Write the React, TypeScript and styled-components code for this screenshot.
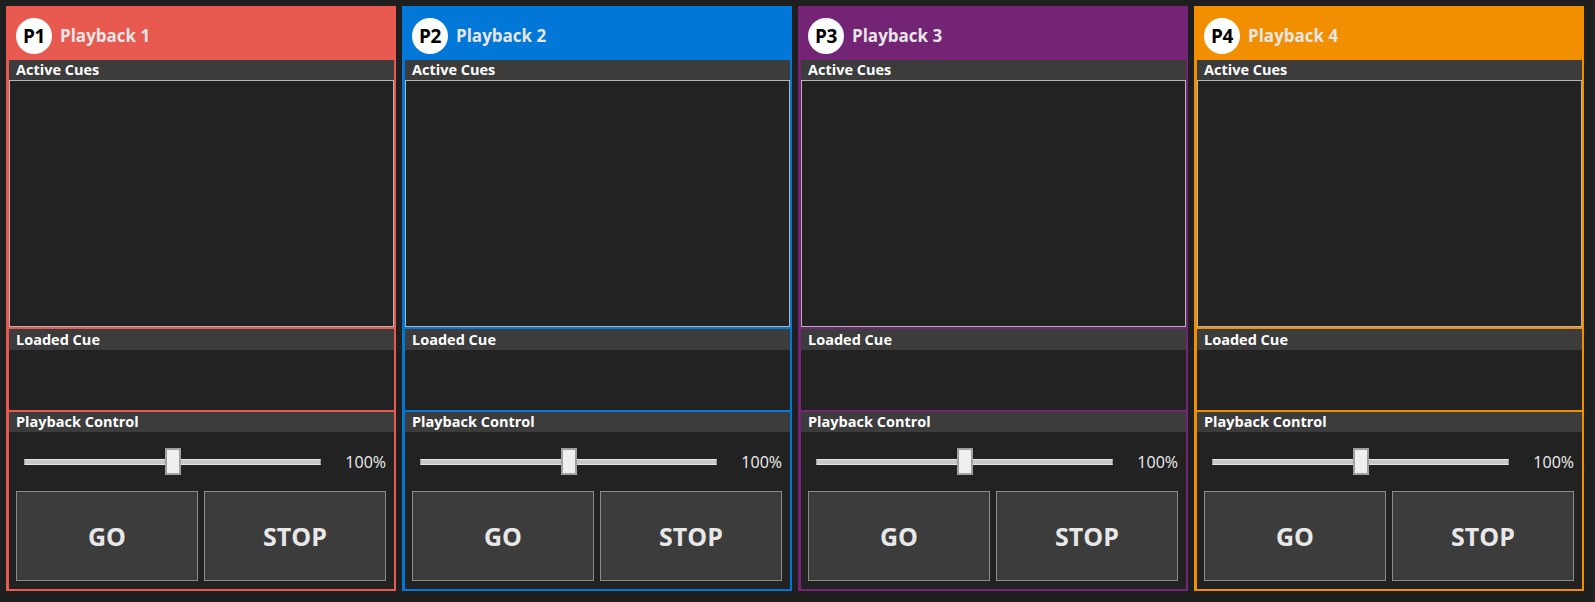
import styled, { createGlobalStyle } from "styled-components";

const GlobalStyle = createGlobalStyle`
  html, body {
    margin: 0;
    padding: 0;
    background: #1f1f1f;
    font-family: "Open Sans", "Liberation Sans", sans-serif;
  }
`;

// page grid
const Board = styled.div`
  box-sizing: border-box;
  width: 1595px;
  height: 602px;
  padding: 6px 11px 11px 6px;
  display: grid;
  grid-template-columns: repeat(4, 1fr);
  gap: 6px;
  background: #1f1f1f;
`;

const Panel = styled.section<{ $accent: string }>`
  box-sizing: border-box;
  display: flex;
  flex-direction: column;
  min-width: 0;
  border: 2px solid ${(p) => p.$accent};
  padding-left: 1px;
  background: ${(p) => p.$accent};
  gap: 2px;
`;

const Header = styled.header`
  height: 52px;
  margin-bottom: -2px;
  display: flex;
  align-items: center;
  gap: 8px;
  padding: 3px 0 0 7px;
  box-sizing: border-box;
`;

const Badge = styled.span`
  width: 36px;
  height: 36px;
  border-radius: 50%;
  background: #ffffff;
  color: #000000;
  display: flex;
  align-items: center;
  justify-content: center;
  font-weight: 700;
  font-size: 19px;
  letter-spacing: -0.5px;
`;

const Title = styled.span`
  color: #e6e6e6;
  font-weight: 700;
  font-size: 17px;
`;

const Section = styled.div<{ $grow?: boolean }>`
  display: flex;
  flex-direction: column;
  background: #222222;
  flex: ${(p) => (p.$grow ? 1 : "none")};
  min-height: 0;
`;

const SectionTitle = styled.div<{ $tall?: boolean }>`
  height: ${(p) => (p.$tall ? 21 : 20)}px;
  line-height: ${(p) => (p.$tall ? 22 : 20)}px;
  background: #3c3c3c;
  color: #ffffff;
  font-weight: 700;
  font-size: 14.5px;
  padding-left: 7px;
  white-space: nowrap;
`;

const CueList = styled.div`
  flex: 1;
  border: 1px solid #b4b4b4;
  background: #222222;
`;

const LoadedBody = styled.div`
  height: 60px;
`;

const ControlBody = styled.div`
  display: flex;
  flex-direction: column;
  padding: 16px 8px 8px 7px;
  gap: 16px;
`;

const SliderRow = styled.div`
  display: flex;
  align-items: center;
  height: 27px;
  padding-left: 8px;
  gap: 22px;
`;

const Slider = styled.div`
  position: relative;
  flex: 1;
  height: 27px;
  display: flex;
  align-items: center;
`;

const Track = styled.div`
  width: 100%;
  height: 6px;
  box-sizing: border-box;
  background: #c8c8c8;
  border: 1px solid #e4e4e4;
  border-left-color: #9a9a9a;
  border-right-color: #9a9a9a;
`;

const Thumb = styled.div`
  position: absolute;
  top: 0;
  width: 16px;
  height: 27px;
  box-sizing: border-box;
  transform: translateX(-50%);
  background: #efefef;
  border: 2px solid #a0a0a0;
`;

const Percent = styled.span`
  color: #f0f0f0;
  font-size: 16px;
  min-width: 43px;
  text-align: right;
`;

const Buttons = styled.div`
  display: grid;
  grid-template-columns: 1fr 1fr;
  gap: 6px;
  height: 90px;
`;

const Button = styled.button`
  background: #3c3c3c;
  border: 1px solid #8c8c8c;
  color: #e8e8e8;
  font-family: "Open Sans", "Liberation Sans", sans-serif;
  font-weight: 700;
  font-size: 25px;
  padding: 0;
  cursor: pointer;
`;

interface PlaybackInfo {
  id: number;
  accent: string;
  level: number;
}

const playbacks: PlaybackInfo[] = [
  { id: 1, accent: "#e8594f", level: 0.5 },
  { id: 2, accent: "#0177d7", level: 0.5 },
  { id: 3, accent: "#742474", level: 0.5 },
  { id: 4, accent: "#f18f00", level: 0.5 },
];

function PlaybackPanel({ info }: { info: PlaybackInfo }) {
  return (
    <Panel $accent={info.accent}>
      <Header>
        <Badge>P{info.id}</Badge>
        <Title>Playback {info.id}</Title>
      </Header>
      <Section $grow>
        <SectionTitle>Active Cues</SectionTitle>
        <CueList />
      </Section>
      <Section>
        <SectionTitle $tall>Loaded Cue</SectionTitle>
        <LoadedBody />
      </Section>
      <Section>
        <SectionTitle>Playback Control</SectionTitle>
        <ControlBody>
          <SliderRow>
            <Slider>
              <Track />
              <Thumb style={{ left: `${info.level * 100}%` }} />
            </Slider>
            <Percent>100%</Percent>
          </SliderRow>
          <Buttons>
            <Button>GO</Button>
            <Button>STOP</Button>
          </Buttons>
        </ControlBody>
      </Section>
    </Panel>
  );
}

export default function App() {
  return (
    <>
      <GlobalStyle />
      <Board>
        {playbacks.map((p) => (
          <PlaybackPanel key={p.id} info={p} />
        ))}
      </Board>
    </>
  );
}
